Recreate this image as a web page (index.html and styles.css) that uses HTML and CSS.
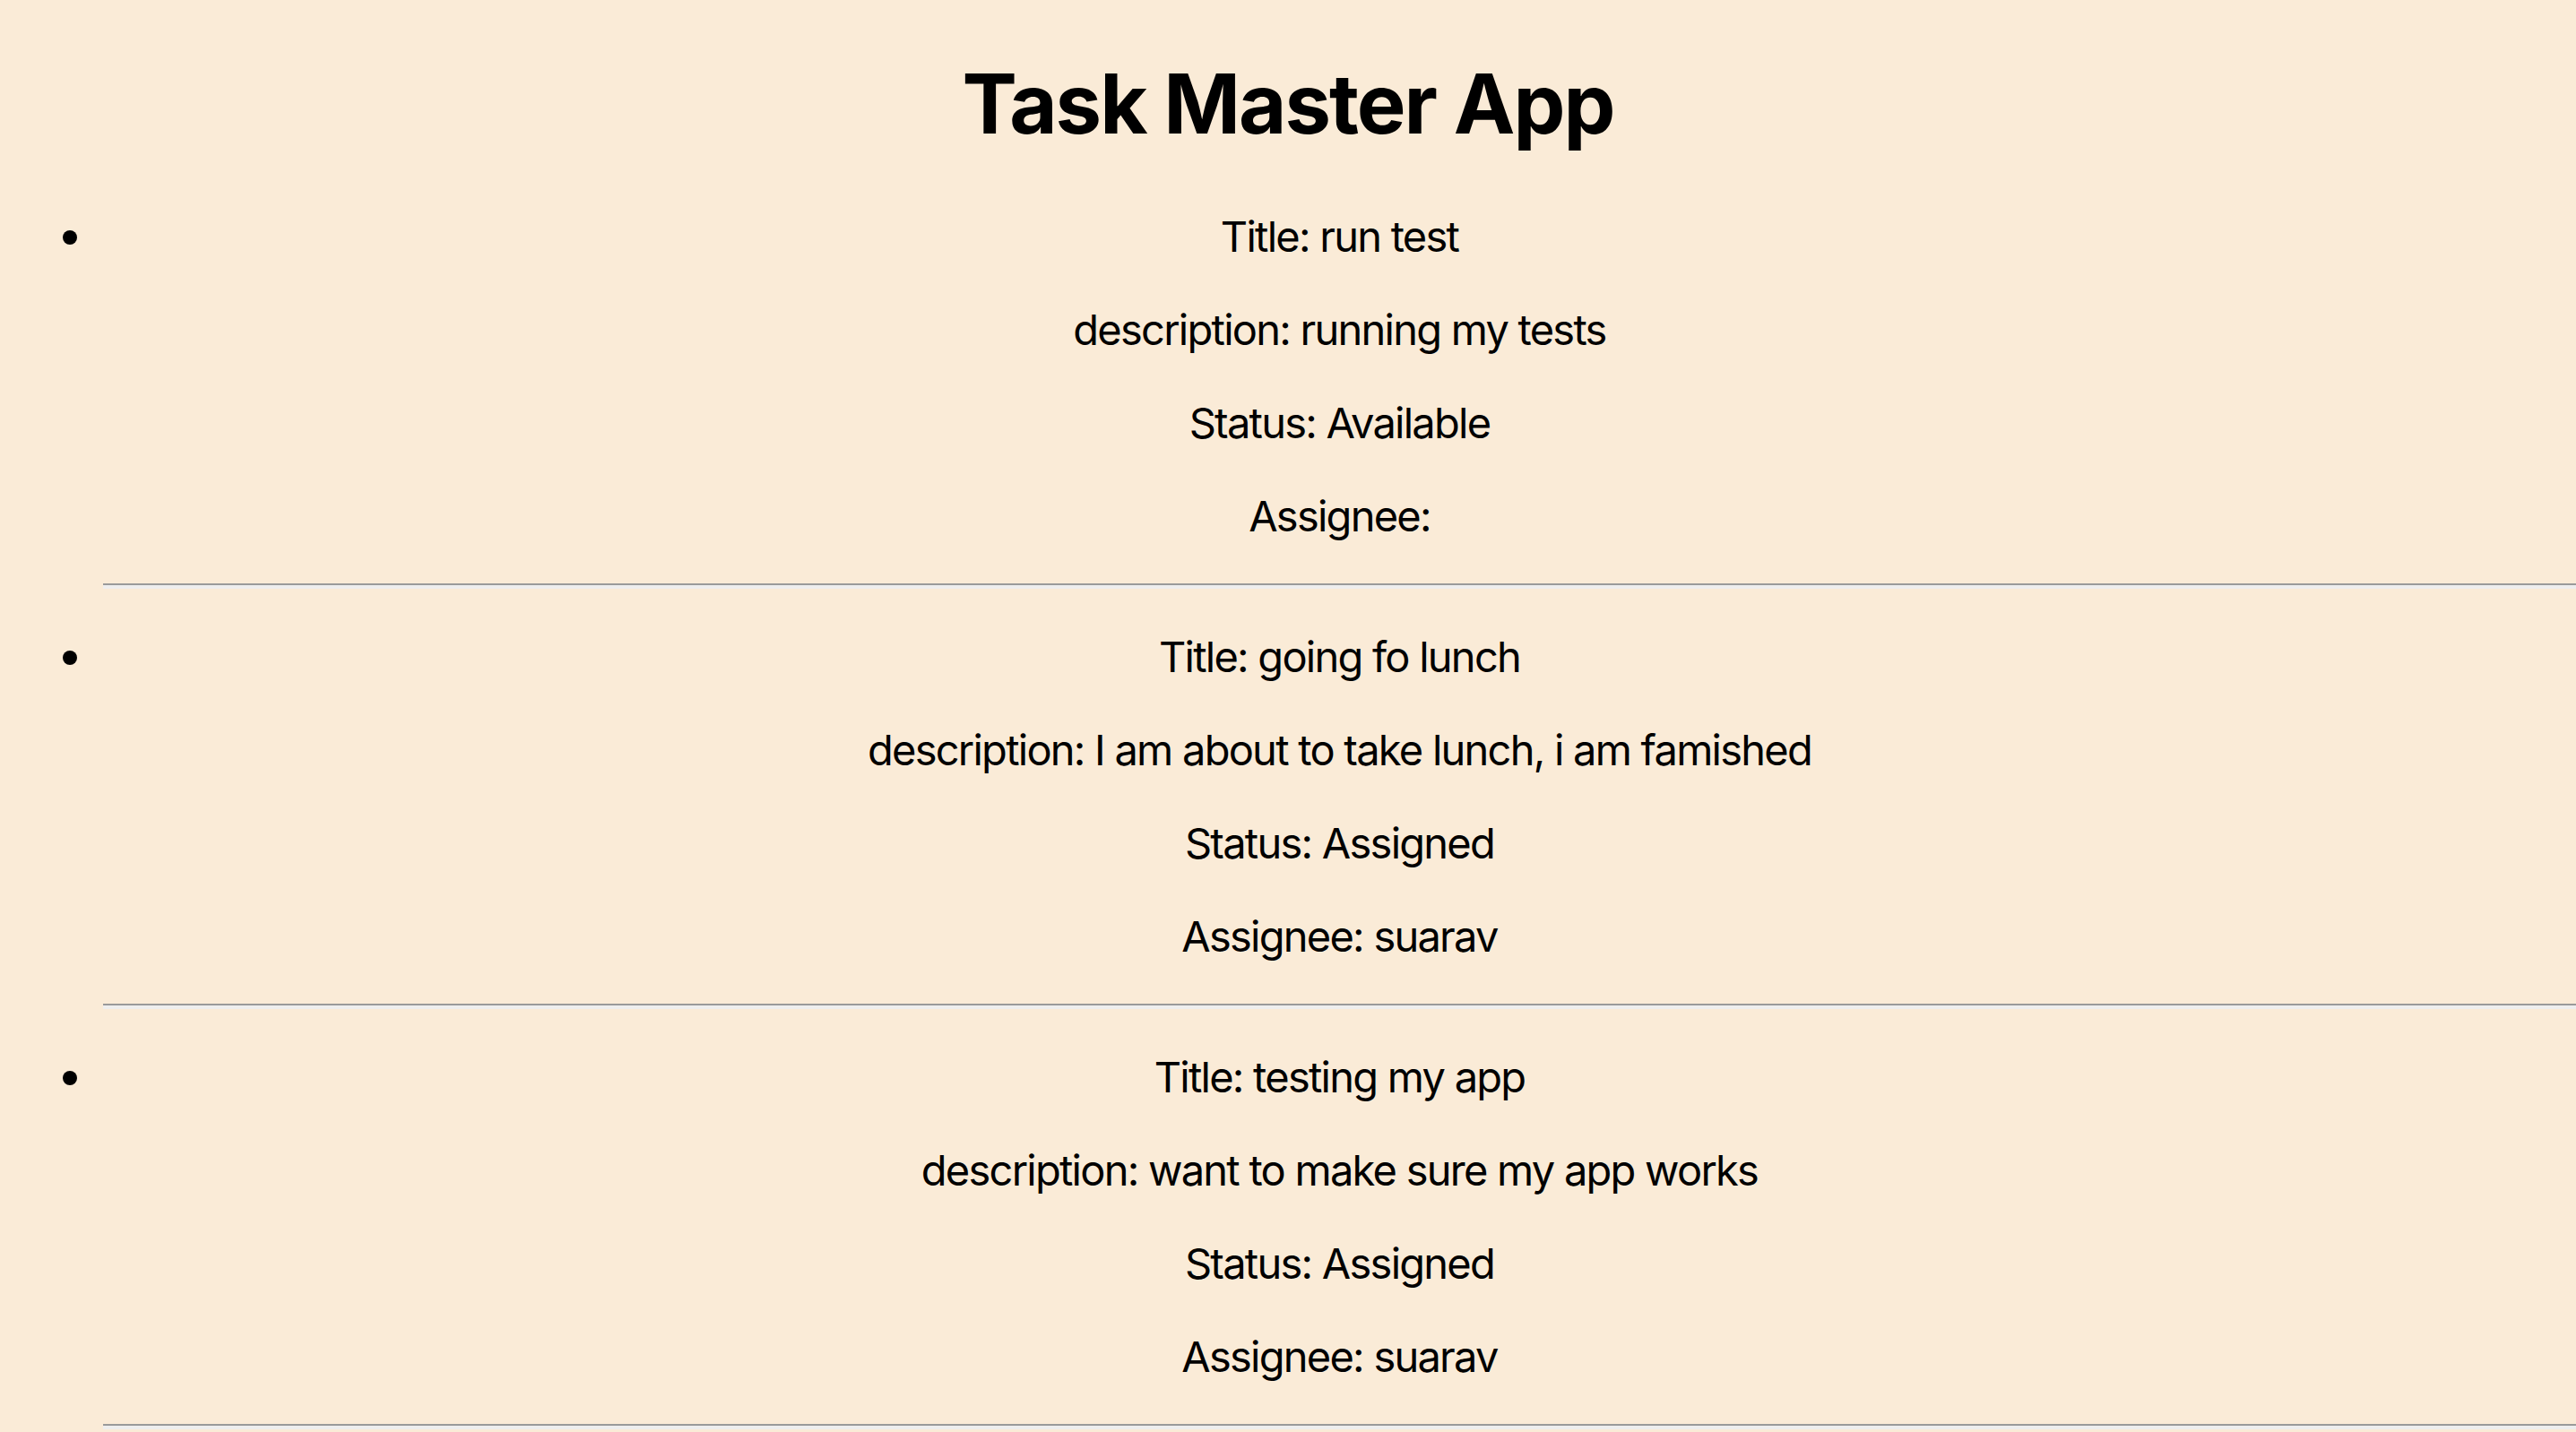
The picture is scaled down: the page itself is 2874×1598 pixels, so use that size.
FILE: index.html
```html
<!DOCTYPE html>
<html lang="en">
<head>
<meta charset="utf-8">
<title>Task Master App</title>
<link rel="stylesheet" href="styles.css">
</head>
<body>
<div class="app">
  <h1 class="app-title">Task Master App</h1>
  <ul class="task-list">
    <li class="task">
      <span class="bullet"></span>
      <div class="task-body">
        <p class="task-field">Title: run test</p>
        <p class="task-field">description: running my tests</p>
        <p class="task-field">Status: Available</p>
        <p class="task-field">Assignee: </p>
        <hr class="task-divider">
      </div>
    </li>
    <li class="task">
      <span class="bullet"></span>
      <div class="task-body">
        <p class="task-field">Title: going fo lunch</p>
        <p class="task-field">description: I am about to take lunch, i am famished</p>
        <p class="task-field">Status: Assigned</p>
        <p class="task-field">Assignee: suarav</p>
        <hr class="task-divider">
      </div>
    </li>
    <li class="task">
      <span class="bullet"></span>
      <div class="task-body">
        <p class="task-field">Title: testing my app</p>
        <p class="task-field">description: want to make sure my app works</p>
        <p class="task-field">Status: Assigned</p>
        <p class="task-field">Assignee: suarav</p>
        <hr class="task-divider">
      </div>
    </li>
  </ul>
</div>
</body>
</html>
```
FILE: styles.css
```css
html, body {
  background: #faebd7;
}
body {
  margin: 0;
  font-family: Inter, "Liberation Sans", sans-serif;
  font-size: 47px;
  color: #000;
}
.app {
  display: flow-root;
}
.app-title {
  font-size: 92px;
  font-weight: 700;
  text-align: center;
  letter-spacing: -2px;
  margin: 60px 0 64px;
  line-height: 111px;
}
.task-list {
  margin: 0;
  padding: 0;
  list-style: none;
}
.task {
  display: grid;
  grid-template-columns: 115px 1fr;
  align-items: start;
}
.bullet {
  width: 16px;
  height: 16px;
  margin: 22px 0 0 70px;
  border-radius: 50%;
  background: #000;
}
.task-body {
  text-align: center;
}
.task-field {
  margin: 47px 0;
  line-height: 57px;
  letter-spacing: -1.75px;
}
.task-field:first-child {
  margin-top: 0;
}
.task-divider {
  height: 0;
  margin: 47px 0;
  border: 0;
  border-top: 2px solid #9a9a9a;
  border-bottom: 4px solid #eeeeee;
}
```
